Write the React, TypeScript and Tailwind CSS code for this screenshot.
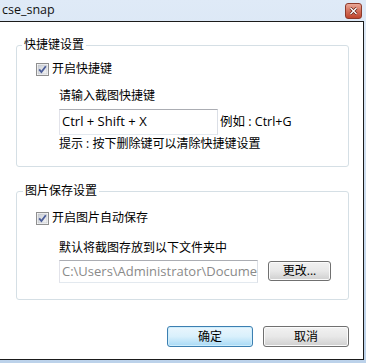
import React from "react";

const font = { fontFamily: '"Open Sans", "Noto Sans CJK SC", sans-serif' };

function CheckBox() {
  return (
    <svg width="13" height="13" viewBox="0 0 13 13" className="shrink-0">
      <defs>
        <linearGradient id="cbg" x1="0" y1="0" x2="1" y2="1">
          <stop offset="0" stopColor="#cbcfd5" />
          <stop offset="1" stopColor="#f6f6f6" />
        </linearGradient>
      </defs>
      <rect x="0.5" y="0.5" width="12" height="12" fill="#fff" stroke="#8f8f8f" />
      <rect x="2" y="2" width="9" height="9" fill="url(#cbg)" stroke="#b8bcc4" strokeWidth="0.6" />
      <path d="M3.2 6.4 L5.4 9 L9.8 3.2" fill="none" stroke="#4d5e9a" strokeWidth="1.8" />
    </svg>
  );
}

function Btn({ label, primary, w }: { label: string; primary?: boolean; w: string }) {
  return (
    <button
      className={
        primary
          ? `${w} flex items-center justify-center rounded-[3px] border border-[#3c7fb1] bg-gradient-to-b from-[#eaf6fd] via-[#d9f0fc] to-[#a7d9f5] text-[12px] text-black shadow-[inset_0_0_0_1px_#cfeefc]`
          : `${w} flex items-center justify-center rounded-[3px] border border-[#707070] bg-gradient-to-b from-[#f2f2f2] via-[#e8e8e8] to-[#cfcfcf] text-[12px] text-black shadow-[inset_0_0_0_1px_#fbfbfb]`
      }
    >
      {label}
    </button>
  );
}

export default function App() {
  return (
    <div
      className="w-[366px] h-[363px] flex flex-col overflow-hidden bg-gradient-to-b from-[#dfeaf7] to-[#bcd2ea] text-[12px] text-black"
      style={font}
    >
      <div className="h-[21px] flex items-center justify-between pl-[2px] pr-[4px]">
        <span className="text-[12.5px] leading-none text-[#111]">cse_snap</span>
        <div className="w-[17px] h-[16px] rounded-[3px] border border-[#8d3a2b] bg-gradient-to-b from-[#eaa898] via-[#d3705b] to-[#c0452c] flex items-center justify-center">
          <svg width="9" height="8" viewBox="0 0 9 8">
            <path d="M1.5 1 L7.5 7 M7.5 1 L1.5 7" stroke="#5a1a10" strokeWidth="2.6" />
            <path d="M1.5 1 L7.5 7 M7.5 1 L1.5 7" stroke="#fff" strokeWidth="1.4" />
          </svg>
        </div>
      </div>

      <div className="h-[339px] mr-[2px] bg-white border-t border-r border-b border-[#1b1b1b] flex flex-col">
        <fieldset className="ml-[16px] w-[333px] mt-[15px] border border-[#d5dfe5] rounded-[3px] pb-[14px] pr-0 pl-0">
          <legend className="ml-[5px] px-[2px] leading-[16px]">快捷键设置</legend>
          <div className="mt-[8px] ml-[19px] h-[16px] flex items-center gap-[3px]">
            <CheckBox />
            <span className="leading-[16px]">开启快捷键</span>
          </div>
          <div className="mt-[11px] ml-[42px] leading-[16px]">请输入截图快捷键</div>
          <div className="mt-[5px] ml-[42px] flex items-center">
            <div className="w-[159px] h-[26px] border border-[#abadb3] border-r-[#dbdfe6] border-b-[#e3e9ef] border-l-[#e2e3ea] flex items-center pl-[2px] text-[13px]">
              Ctrl + Shift + X
            </div>
            <span className="ml-[2px] text-[12.5px]">例如 : Ctrl+G</span>
          </div>
          <div className="mt-[1px] ml-[42px] leading-[16px]">提示 : 按下删除键可以清除快捷键设置</div>
        </fieldset>

        <fieldset className="ml-[16px] w-[333px] mt-[16px] border border-[#d5dfe5] rounded-[3px] pb-[16px] pr-0 pl-0">
          <legend className="ml-[6px] px-[2px] leading-[16px]">图片保存设置</legend>
          <div className="mt-[11px] ml-[19px] h-[16px] flex items-center gap-[3px]">
            <CheckBox />
            <span className="leading-[16px]">开启图片自动保存</span>
          </div>
          <div className="mt-[14px] ml-[42px] leading-[16px]">默认将截图存放到以下文件夹中</div>
          <div className="mt-[4px] ml-[42px] flex items-start gap-[10px]">
            <div className="w-[199px] h-[23px] border border-[#abadb3] border-r-[#dbdfe6] border-b-[#e3e9ef] border-l-[#e2e3ea] flex items-center pl-[2px] overflow-hidden whitespace-nowrap text-[13px] text-[#8a8a8a]">
              C:\Users\Administrator\Documents
            </div>
            <div className="mt-[1px]">
              <Btn label="更改..." w="w-[63px] h-[20px]" />
            </div>
          </div>
        </fieldset>

        <div className="mt-[26px] pr-[14px] flex justify-end gap-[10px]">
          <Btn label="确定" primary w="w-[86px] h-[21px]" />
          <Btn label="取消" w="w-[86px] h-[21px]" />
        </div>
      </div>
    </div>
  );
}
